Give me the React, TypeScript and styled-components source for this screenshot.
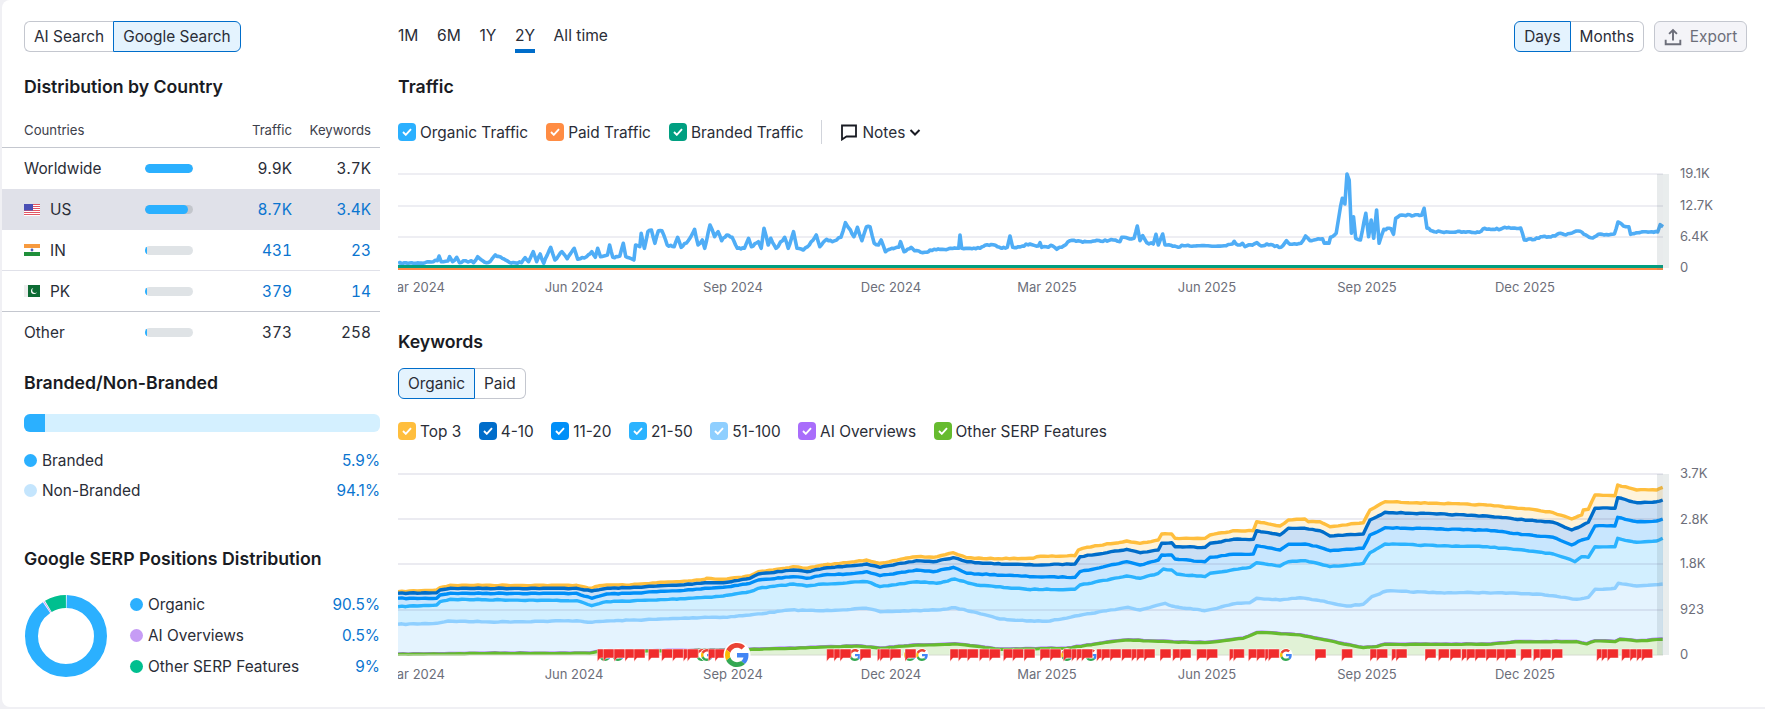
import React from "react";
import styled, { createGlobalStyle } from "styled-components";

type P = [number, number];

const seg = (bx: number, by: number, sx: number, sy: number, pts: number[][], min: number, max: number): P[] =>
  pts
    .map(([x, y]) => [bx + x / sx, by + y / sy] as P)
    .filter(([x]) => x >= min && x < max);

const d = (pts: P[]) => "M" + pts.map(([x, y]) => `${x.toFixed(1)} ${y.toFixed(1)}`).join("L");
const area = (pts: P[], base: number) =>
  `${d(pts)}L${pts[pts.length - 1][0]} ${base}L${pts[0][0]} ${base}Z`;

// Fine sampling with a small repeatable wobble, for the noisy look of daily data.
const densify = (pts: P[], step: number, amp: number): P[] => {
  const out: P[] = [];
  let seed = 7;
  const rnd = () => {
    seed = (seed * 16807) % 2147483647;
    return seed / 2147483647 - 0.5;
  };
  for (let i = 0; i < pts.length - 1; i++) {
    const [x0, y0] = pts[i];
    const [x1, y1] = pts[i + 1];
    const n = Math.max(1, Math.round((x1 - x0) / step));
    out.push(pts[i]);
    for (let k = 1; k < n; k++) {
      out.push([x0 + ((x1 - x0) * k) / n, y0 + ((y1 - y0) * k) / n + rnd() * amp]);
    }
  }
  out.push(pts[pts.length - 1]);
  return out;
};

const trafficLine: P[] = densify([
  ...seg(390, 0, 2.85, 3, [[23,790],[100,788],[135,782],[140,768],[146,785],[165,783],[170,770],[178,785],[190,772],[198,788],[215,782],[222,786],[232,782],[238,788],[250,770],[270,787],[285,785],[300,765],[320,775],[340,787],[375,788],[385,773],[395,785],[408,755],[418,785],[428,762],[438,790],[458,742],[470,780],[490,755],[505,776],[525,745],[535,778],[560,770],[575,755],[585,772],[592,745],[600,770],[620,765],[626,735],[635,772],[655,768],[665,730],[672,770],[695,780],[700,735],[712,740],[716,700],[725,745],[735,695],[745,690],[755,730],[765,692],[775,692],[790,735],[810,740],[820,712],[830,742],[850,722],[868,688],[878,735],[890,720],[897,745],[912,675],[925,710],[935,695],[945,722],[960,705],[975,712],[990,745],[1010,745],[1022,715],[1030,740],[1050,725],[1058,745],[1066,685],[1078,735],[1085,715],[1100,745],[1125,712],[1135,745],[1150,695],[1160,745],[1178,750],[1195,735],[1215,705],[1225,740],[1245,718],[1260,725],[1285,712],[1298,668],[1312,690],[1322,710],[1332,682],[1345,722],[1358,680],[1368,680],[1380,730],[1392,735],[1400,720],[1412,755],[1430,745],[1450,742],[1455,725],[1465,755],[1485,742],[1495,752],[1530,757],[1545,748],[1568,747]], 0, 930),
  ...seg(930, 170, 3, 3, [[0,240],[80,235],[86,235],[90,195],[95,235],[150,235],[165,226],[190,224],[215,235],[232,232],[240,198],[248,232],[265,230],[300,222],[325,228],[330,218],[335,232],[355,232],[362,226],[380,238],[395,232],[420,212],[470,215],[550,210],[570,215],[575,202],[600,207],[612,205],[622,168],[630,212],[638,197],[650,218],[670,222],[678,193],[685,225],[698,192],[705,225],[745,232],[755,226],[840,228]], 930, 1200),
  ...seg(1200, 0, 2.775, 3, [[0,737],[50,738],[90,732],[95,724],[105,735],[118,730],[125,740],[150,732],[158,728],[170,738],[185,732],[225,742],[240,722],[250,733],[280,730],[293,708],[305,722],[340,716],[345,730],[358,730],[362,712],[378,700],[390,620],[395,595],[402,612],[408,522],[414,540],[420,700],[426,650],[432,715],[445,720],[460,640],[468,710],[475,660],[482,715],[490,630],[497,730],[510,688],[530,686],[537,703],[543,655],[560,645],[615,646],[622,625],[630,685],[650,695],[775,697],[785,687],[835,687],[845,682],[890,684],[900,720],[940,715],[950,710],[985,708],[1000,700],[1015,705],[1050,693],[1075,708],[1090,714],[1105,703],[1150,702],[1160,666],[1175,678],[1190,680],[1195,703],[1215,698],[1270,696],[1277,674],[1285,680]], 1200, 1700),
], 2, 1.6);

const three = (a: number[][], b: number[][], c: number[][]): P[] =>
  densify([
    ...seg(390, 560, 3, 3, a, 0, 880),
    ...seg(880, 460, 3, 3, b, 880, 1320),
    ...seg(1320, 460, 3, 3, c, 1320, 1700),
  ], 4, 0.8);

const top3 = three(
  [[24,95],[140,90],[150,83],[180,76],[300,76],[460,76],[560,76],[605,85],[615,80],[650,75],[720,75],[800,68],[870,65],[945,58],[950,55],[1000,58],[1080,47],[1105,35],[1150,30],[1210,20],[1250,25],[1300,15],[1370,8],[1430,0],[1470,8]],
  [[0,310],[40,302],[110,290],[160,292],[220,278],[260,293],[320,296],[460,295],[470,290],[585,287],[595,270],[620,262],[740,243],[780,250],[835,240],[845,222],[875,222],[885,235],[975,235],[990,225],[1060,212],[1120,212],[1130,185],[1200,198],[1225,180],[1275,177],[1285,185],[1320,190]],
  [[0,185],[30,200],[130,188],[150,150],[195,125],[350,130],[500,135],[650,150],[700,158],[755,177],[785,165],[790,150],[805,148],[825,105],[885,107],[893,75],[950,90],[1010,90],[1028,82]]
);
const s410 = three(
  [[24,100],[140,98],[150,90],[180,85],[460,85],[560,85],[605,93],[650,85],[720,83],[800,78],[870,75],[945,68],[1000,68],[1080,55],[1105,42],[1210,30],[1250,35],[1300,25],[1370,18],[1430,12],[1470,20]],
  [[0,322],[40,315],[110,302],[160,305],[220,293],[260,305],[320,310],[460,315],[585,312],[600,290],[740,268],[780,278],[835,270],[845,250],[875,248],[885,260],[975,262],[990,250],[1060,238],[1120,238],[1130,212],[1200,225],[1225,205],[1275,205],[1320,215]],
  [[0,212],[30,228],[130,222],[150,180],[195,157],[350,162],[500,168],[650,183],[700,187],[755,210],[785,197],[805,187],[825,145],[885,145],[893,113],[950,128],[1010,125],[1028,120]]
);
const s1120 = three(
  [[24,115],[140,115],[150,105],[180,100],[460,100],[560,100],[605,115],[650,102],[720,100],[800,95],[870,92],[945,85],[1000,82],[1080,70],[1105,60],[1210,50],[1250,55],[1300,45],[1370,42],[1430,35],[1470,47]],
  [[0,347],[40,342],[110,330],[160,335],[220,322],[260,340],[460,350],[585,352],[600,335],[740,305],[780,315],[835,300],[845,285],[875,285],[885,297],[975,305],[990,292],[1060,283],[1120,282],[1130,257],[1200,270],[1225,253],[1275,252],[1320,265]],
  [[0,262],[30,272],[130,265],[150,225],[195,203],[350,207],[500,210],[650,228],[700,232],[755,255],[785,240],[805,235],[825,198],[885,198],[893,172],[950,185],[1010,183],[1028,177]]
);
const s2150 = three(
  [[24,140],[140,135],[150,125],[180,118],[560,122],[605,137],[650,125],[800,120],[945,112],[1000,108],[1080,95],[1105,85],[1210,72],[1250,78],[1300,72],[1430,65],[1470,75]],
  [[0,380],[110,365],[170,370],[225,357],[290,375],[440,388],[585,388],[600,375],[740,348],[780,355],[835,340],[850,327],[875,330],[890,342],[975,350],[990,340],[1110,322],[1130,308],[1200,318],[1225,305],[1275,302],[1320,317]],
  [[0,312],[30,320],[130,310],[150,278],[195,252],[350,257],[500,260],[650,275],[700,282],[765,305],[785,290],[805,292],[825,260],[885,260],[893,235],[950,247],[1010,243],[1028,235]]
);
const s51 = densify([
  ...seg(390, 560, 3, 3, [[24,193],[140,190],[175,183],[300,186],[460,184],[560,182],[605,187],[650,183],[800,178],[945,172],[1000,172],[1080,165],[1200,150],[1300,152],[1430,145],[1470,155]], 0, 880),
  ...seg(880, 560, 3, 3, [[0,155],[170,150],[225,143],[290,158],[360,177],[440,183],[510,183],[585,168],[680,152],[745,142],[780,150],[855,130],[885,140],[975,152],[1070,130],[1110,128],[1130,115],[1200,120],[1260,113],[1320,122]], 880, 1320),
  ...seg(1320, 460, 3, 3, [[0,422],[80,438],[130,433],[155,410],[200,393],[350,398],[500,398],[650,402],[770,418],[805,412],[825,388],[885,385],[895,370],[950,378],[1028,372]], 1320, 1700),
], 4, 0.8);
const green = densify([
  ...seg(390, 560, 3, 3, [[24,283],[300,280],[600,280],[620,275],[1000,270],[1200,265],[1400,258],[1470,262]], 0, 880),
  ...seg(880, 560, 3, 3, [[0,265],[100,256],[225,252],[360,268],[560,265],[680,247],[745,240],[880,246],[975,248],[1090,235],[1130,218],[1160,218],[1260,225],[1320,240]], 880, 1320),
  ...seg(1320, 460, 3, 3, [[0,537],[130,563],[170,560],[195,553],[500,553],[600,545],[770,545],[800,552],[825,543],[885,545],[900,538],[950,543],[1028,538]], 1320, 1700),
], 5, 0.5);

const layers: { pts: P[]; fill: string; stroke: string }[] = [
  { pts: top3, fill: "#fff3d9", stroke: "#ffbe3d" },
  { pts: s410, fill: "#cbdff4", stroke: "#006dca" },
  { pts: s1120, fill: "#c8e6fe", stroke: "#008ff8" },
  { pts: s2150, fill: "#d2efff", stroke: "#2bb3ff" },
  { pts: s51, fill: "#e4f3fe", stroke: "#8fcfff" },
];

const flagX = [
  ...[622, 640, 672, 705, 732, 775, 815, 848, 880, 892, 955, 975, 1310, 1332, 1350, 1410, 1462].map((x) => 390 + x / 3),
  ...[0, 30, 75, 210, 235, 262, 298, 328, 370, 398, 432, 480, 510, 550, 575, 590, 605, 650, 665, 690, 725, 755, 770, 792, 840, 878, 900, 950, 980, 1048, 1060, 1105, 1130, 1155, 1165, 1305].map((x) => 880 + x / 3),
  ...[65, 150, 170, 215, 228, 315, 355, 390, 425, 440, 465, 498, 530, 555, 602, 640, 660, 695, 830, 845, 862, 905, 930, 950, 965].map((x) => 1320 + x / 3),
].filter((x) => x < 1655);

const smallG = [605, 618, 702, 707, 855, 910, 922, 1067, 1091, 1286];

const GoogleG = ({ x, y, size }: { x: number; y: number; size: number }) => (
  <g transform={`translate(${x - size / 2} ${y - size / 2}) scale(${size / 48})`}>
    <circle cx="24" cy="24" r="27" fill="#fff" />
    <path fill="#EA4335" d="M24 9.5c3.54 0 6.71 1.22 9.21 3.6l6.85-6.85C35.9 2.38 30.47 0 24 0 14.62 0 6.51 5.38 2.56 13.22l7.98 6.19C12.43 13.72 17.74 9.5 24 9.5z" />
    <path fill="#4285F4" d="M46.98 24.55c0-1.57-.15-3.09-.38-4.55H24v9.02h12.94c-.58 2.96-2.26 5.48-4.78 7.18l7.73 6c4.51-4.18 7.09-10.36 7.09-17.65z" />
    <path fill="#FBBC05" d="M10.53 28.59c-.5-1.45-.78-2.99-.78-4.59s.27-3.14.78-4.59l-7.98-6.19C.92 16.46 0 20.12 0 24c0 3.88.92 7.54 2.56 10.78l7.97-6.19z" />
    <path fill="#34A853" d="M24 48c6.48 0 11.93-2.13 15.89-5.81l-7.73-6c-2.15 1.45-4.92 2.3-8.16 2.3-6.26 0-11.57-4.22-13.47-9.91l-7.98 6.19C6.51 42.62 14.62 48 24 48z" />
  </g>
);

const BODY = "15.4px";

const GlobalStyle = createGlobalStyle`
  html, body { margin: 0; padding: 0; background: #f0f0f4; }
  body { font-family: Inter, "Noto Sans", "Liberation Sans", sans-serif; color: #191b23; font-size: ${BODY}; }
  * { box-sizing: border-box; }
`;

const Card = styled.div`
  width: 1763px; height: 707px; margin-left: 2px;
  background: #fff; overflow: hidden;
  display: grid; grid-template-columns: 378px minmax(0, 1fr);
  border-radius: 8px 0 0 8px;
`;
const Left = styled.aside` padding-top: 21px; `;
const Right = styled.main` padding: 21px 18px 0 18px; `;
const Inset = styled.div` padding: 0 0 0 22px; `;
const SegGroup = styled.div<{ $mt?: number }>`
  display: inline-flex; height: 31px; vertical-align: top; margin-top: ${(p) => p.$mt ?? 0}px;
`;
const SegBtn = styled.div<{ $on?: boolean; $pos: "l" | "r" }>`
  display: flex; align-items: center; justify-content: center; padding: 0 9px;
  font-size: ${BODY}; color: #2a2d37;
  border: 1px solid ${(p) => (p.$on ? "#006dca" : "#c4c7cf")};
  background: ${(p) => (p.$on ? "#e4f3fe" : "#fff")};
  border-radius: ${(p) => (p.$pos === "l" ? "6px 0 0 6px" : "0 6px 6px 0")};
  ${(p) => (p.$pos === "r" && !p.$on ? "border-left: none;" : "")}
  ${(p) => (p.$pos === "l" && !p.$on ? "border-right: none;" : "")}
`;
const Title = styled.h3<{ $mt: number }>`
  margin: ${(p) => p.$mt}px 0 0; height: 24px; line-height: 24px;
  font-size: 17.7px; font-weight: 600; color: #191b23;
`;
const TableHead = styled.div`
  display: grid; grid-template-columns: 1fr 60px 79px; height: 49px;
  padding: 14px 9px 0 22px; align-items: center; font-size: 13.2px; color: #3d404b;
  border-bottom: 1px solid #c4c7cf; text-align: right;
`;
const HeadFirst = styled.span` text-align: left; `;
const Row = styled.div<{ $sel?: boolean; $line?: string }>`
  display: grid; grid-template-columns: 121px 1fr 60px 79px; height: 41px;
  padding: 0 9px 0 22px; align-items: center; font-size: ${BODY};
  background: ${(p) => (p.$sel ? "#e0e1e9" : "#fff")};
  border-bottom: ${(p) => (p.$line ? `1px solid ${p.$line}` : "none")};
`;
const Country = styled.div` display: flex; align-items: center; gap: 10px; color: #2a2d37; `;
const Bar = styled.div<{ $sel?: boolean }>`
  width: 48px; height: 9px; border-radius: 5px; overflow: hidden;
  background: ${(p) => (p.$sel ? "#c3c6cc" : "#dfe3e6")};
`;
const BarFill = styled.div` height: 100%; background: #2bb0ff; border-radius: 5px; `;
const Num = styled.span<{ $link?: boolean }>`
  text-align: right; font-variant-numeric: tabular-nums;
  color: ${(p) => (p.$link ? "#0a75d0" : "#2a2d37")};
`;
const Branded = styled.div`
  width: 356px; height: 18px; margin-top: 19px; background: #d4f0ff; border-radius: 6px; overflow: hidden;
`;
const BrandedFill = styled.div` height: 100%; background: #2bb0ff; `;
const LegendRows = styled.div<{ $mt?: number; $w: number; $h: number }>`
  width: ${(p) => p.$w}px; margin-top: ${(p) => p.$mt ?? 0}px;
  & > div { height: ${(p) => p.$h}px; }
`;
const LegendRow = styled.div`
  display: flex; align-items: center; font-size: ${BODY}; color: #2a2d37;
`;
const Dot = styled.span<{ $c: string }>`
  width: 13px; height: 13px; border-radius: 50%; background: ${(p) => p.$c}; margin-right: 5px; flex: none;
`;
const Pct = styled.span` margin-left: auto; color: #0a75d0; `;
const SerpRow = styled.div` display: flex; align-items: center; gap: 22px; margin-top: 18px; `;
const Donut = styled.svg` width: 84px; height: 84px; flex: none; `;
const Toolbar = styled.div` display: flex; align-items: flex-start; `;
const Range = styled.div` display: flex; gap: 18.6px; `;
const RangeTab = styled.div<{ $on?: boolean }>`
  height: 32px; line-height: 29px; font-size: 15.6px; color: #2a2d37;
  border-bottom: 4px solid ${(p) => (p.$on ? "#006dca" : "transparent")};
`;
const ToolRight = styled.div` margin-left: auto; display: flex; gap: 10px; `;
const ExportBtn = styled.div`
  width: 93px; height: 31px; display: flex; align-items: center; justify-content: center; gap: 8px;
  font-size: ${BODY}; color: #6c6e79; background: #f4f4f8; border: 1px solid #c4c7cf; border-radius: 6px;
`;
const Legend = styled.div<{ $mt: number; $gap: number }>`
  display: flex; align-items: center; gap: ${(p) => p.$gap}px; height: 24px; margin-top: ${(p) => p.$mt}px;
`;
const Item = styled.div` display: flex; align-items: center; gap: 4px; font-size: ${BODY}; color: #2a2d37; `;
const Check = styled.span<{ $c: string }>`
  width: 18px; height: 18px; border-radius: 4px; background: ${(p) => p.$c};
  display: flex; align-items: center; justify-content: center; flex: none;
`;
const Sep = styled.div` width: 1px; height: 24px; background: #d1d4db; `;
const Notes = styled.div` display: flex; align-items: center; gap: 4px; font-size: ${BODY}; color: #2a2d37; `;
const Chart = styled.svg<{ $h: number; $mt: number }>`
  display: block; width: 1367px; height: ${(p) => p.$h}px; margin-top: ${(p) => p.$mt}px;
  font-family: Inter, "Noto Sans", sans-serif; font-size: 13px;
`;
const Tick = styled.text` fill: #6c6e79; font-size: 13px; `;

const CheckBox = ({ c }: { c: string }) => (
  <Check $c={c}>
    <svg width="10" height="8" viewBox="0 0 10 8" fill="none">
      <path d="M1 4l2.8 2.8L9 1.2" stroke="#fff" strokeWidth="1.9" />
    </svg>
  </Check>
);

const Flag = ({ code }: { code: string }) => (
  <svg width="16" height="12" viewBox="0 0 16 12">
    {code === "US" && (
      <>
        <rect width="16" height="12" fill="#fff" />
        {[0, 2, 4, 6, 8, 10].map((y) => <rect key={y} y={y} width="16" height="1" fill="#e25563" />)}
        <rect width="9" height="6.5" fill="#4a4fb5" />
      </>
    )}
    {code === "IN" && (
      <>
        <rect width="16" height="4" fill="#f79a3e" />
        <rect y="4" width="16" height="4" fill="#fff" />
        <rect y="8" width="16" height="4" fill="#1f8f3a" />
        <circle cx="8" cy="6" r="1.4" fill="#5060b0" />
      </>
    )}
    {code === "PK" && (
      <>
        <rect width="16" height="12" fill="#eee" />
        <rect x="4" width="12" height="12" fill="#0d6b34" />
        <circle cx="10" cy="6" r="3" fill="#fff" />
        <circle cx="11" cy="5.3" r="2.7" fill="#0d6b34" />
      </>
    )}
  </svg>
);

const countries = [
  { code: "US", name: "US", w: 90, t: "8.7K", k: "3.4K", sel: true },
  { code: "IN", name: "IN", w: 5, t: "431", k: "23", line: "#e0e1e9" },
  { code: "PK", name: "PK", w: 5, t: "379", k: "14", line: "#c4c7cf" },
];

const xTicks: [string, number][] = [["Mar 2024", 415], ["Jun 2024", 574], ["Sep 2024", 733], ["Dec 2024", 891], ["Mar 2025", 1047], ["Jun 2025", 1207], ["Sep 2025", 1367], ["Dec 2025", 1525]];

const C = 2 * Math.PI * 34.5;
const arc = (from: number, to: number) => ({
  strokeDasharray: `${(C * (to - from)) / 100} ${C}`,
  strokeDashoffset: `${(-C * from) / 100}`,
});

export default function App() {
  return (
    <Card>
      <GlobalStyle />
      <Left>
        <Inset>
          <SegGroup>
            <SegBtn $pos="l">AI Search</SegBtn>
            <SegBtn $pos="r" $on>Google Search</SegBtn>
          </SegGroup>
          <Title $mt={23}>Distribution by Country</Title>
        </Inset>
        <TableHead>
          <HeadFirst>Countries</HeadFirst>
          <span>Traffic</span>
          <span>Keywords</span>
        </TableHead>
        <Row>
          <Country>Worldwide</Country>
          <Bar><BarFill style={{ width: "100%" }} /></Bar>
          <Num>9.9K</Num>
          <Num>3.7K</Num>
        </Row>
        {countries.map((c) => (
          <Row key={c.code} $sel={c.sel} $line={c.line}>
            <Country><Flag code={c.code} />{c.name}</Country>
            <Bar $sel={c.sel}><BarFill style={{ width: `${c.w}%` }} /></Bar>
            <Num $link>{c.t}</Num>
            <Num $link>{c.k}</Num>
          </Row>
        ))}
        <Row>
          <Country>Other</Country>
          <Bar><BarFill style={{ width: "5%" }} /></Bar>
          <Num>373</Num>
          <Num>258</Num>
        </Row>
        <Inset>
          <Title $mt={18}>Branded/Non-Branded</Title>
          <Branded><BrandedFill style={{ width: "5.9%" }} /></Branded>
          <LegendRows $mt={13} $w={356} $h={30}>
            <LegendRow><Dot $c="#2bb0ff" />Branded<Pct>5.9%</Pct></LegendRow>
            <LegendRow><Dot $c="#c4e5fd" />Non-Branded<Pct>94.1%</Pct></LegendRow>
          </LegendRows>
          <Title $mt={42}>Google SERP Positions Distribution</Title>
          <SerpRow>
            <Donut viewBox="0 0 84 84">
              <g transform="rotate(-90 42 42)" fill="none" strokeWidth="13">
                <circle cx="42" cy="42" r="34.5" stroke="#2bb0ff" style={arc(0.3, 90.3)} />
                <circle cx="42" cy="42" r="34.5" stroke="#c69cf5" style={arc(90.6, 91.0)} />
                <circle cx="42" cy="42" r="34.5" stroke="#00bf8f" style={arc(91.3, 99.8)} />
              </g>
            </Donut>
            <LegendRows $w={250} $h={31}>
              <LegendRow><Dot $c="#2bb0ff" />Organic<Pct>90.5%</Pct></LegendRow>
              <LegendRow><Dot $c="#c69cf5" />AI Overviews<Pct>0.5%</Pct></LegendRow>
              <LegendRow><Dot $c="#00bf8f" />Other SERP Features<Pct>9%</Pct></LegendRow>
            </LegendRows>
          </SerpRow>
        </Inset>
      </Left>
      <Right>
        <Toolbar>
          <Range>
            <RangeTab>1M</RangeTab>
            <RangeTab>6M</RangeTab>
            <RangeTab>1Y</RangeTab>
            <RangeTab $on>2Y</RangeTab>
            <RangeTab>All time</RangeTab>
          </Range>
          <ToolRight>
            <SegGroup>
              <SegBtn $pos="l" $on>Days</SegBtn>
              <SegBtn $pos="r">Months</SegBtn>
            </SegGroup>
            <ExportBtn>
              <svg width="18" height="18" viewBox="0 0 16 16" fill="none" stroke="#6c6e79" strokeWidth="1.7">
                <path d="M8 11V2M4.5 5.2L8 1.8l3.5 3.4M1.5 10.5v4h13v-4" />
              </svg>
              Export
            </ExportBtn>
          </ToolRight>
        </Toolbar>
        <Title $mt={22}>Traffic</Title>
        <Legend $mt={21} $gap={18}>
          <Item><CheckBox c="#2bb0ff" />Organic Traffic</Item>
          <Item><CheckBox c="#ff8c43" />Paid Traffic</Item>
          <Item><CheckBox c="#009f81" />Branded Traffic</Item>
          <Sep />
          <Notes>
            <svg width="18" height="18" viewBox="0 0 18 18" fill="none" stroke="#191b23" strokeWidth="1.8">
              <path d="M2 2.5h14v11H6.5L2 16.5z" />
            </svg>
            Notes
            <svg width="12" height="12" viewBox="0 0 12 12" fill="none" stroke="#191b23" strokeWidth="2">
              <path d="M1.5 4L6 8.5 10.5 4" />
            </svg>
          </Notes>
        </Legend>
        <Chart $h={130} $mt={21} viewBox="398 165 1367 130">
          {[174, 206, 237].map((y) => (
            <line key={y} x1="398" x2="1663" y1={y} y2={y} stroke="#e9e9ef" strokeWidth="1.5" />
          ))}
          <rect x="1663" y="174" width="6" height="94" fill="#e9eded" />
          <path d={d(trafficLine)} fill="none" stroke="#4fadf6" strokeWidth="3.6" strokeLinejoin="round" />
          <line x1="398" x2="1663" y1="269" y2="269" stroke="#ff8c43" strokeWidth="2" />
          <line x1="398" x2="1663" y1="266.5" y2="266.5" stroke="#009f81" strokeWidth="3" />
          <rect x="1657" y="174" width="6" height="96" fill="rgba(90,110,120,.14)" />
          {[["19.1K", 178], ["12.7K", 210], ["6.4K", 241], ["0", 272]].map(([t, y]) => (
            <Tick key={t} x="1680" y={y}>{t}</Tick>
          ))}
          {xTicks.map(([t, x]) => (
            <Tick key={t} x={x} y="292" textAnchor="middle">{t}</Tick>
          ))}
        </Chart>
        <Title $mt={35}>Keywords</Title>
        <SegGroup $mt={14}>
          <SegBtn $pos="l" $on>Organic</SegBtn>
          <SegBtn $pos="r">Paid</SegBtn>
        </SegGroup>
        <Legend $mt={20} $gap={17.5}>
          <Item><CheckBox c="#ffbe3d" />Top 3</Item>
          <Item><CheckBox c="#006dca" />4-10</Item>
          <Item><CheckBox c="#008ff8" />11-20</Item>
          <Item><CheckBox c="#2bb3ff" />21-50</Item>
          <Item><CheckBox c="#8fcfff" />51-100</Item>
          <Item><CheckBox c="#a96dfb" />AI Overviews</Item>
          <Item><CheckBox c="#66bb2f" />Other SERP Features</Item>
        </Legend>
        <Chart $h={220} $mt={22} viewBox="398 465 1367 220">
          {layers.map((l) => <path key={l.stroke} d={area(l.pts, 655)} fill={l.fill} />)}
          <path d={area(green, 655)} fill="#e1f2d6" />
          {[474, 519, 564, 610].map((y) => (
            <line key={y} x1="398" x2="1663" y1={y} y2={y} stroke="rgba(120,125,165,.2)" strokeWidth="1.5" />
          ))}
          <rect x="1663" y="474" width="6" height="181" fill="#e9eded" />
          {layers.map((l) => (
            <path key={l.stroke} d={d(l.pts)} fill="none" stroke={l.stroke} strokeWidth="3.4" strokeLinejoin="round" />
          ))}
          <path d={d(green)} fill="none" stroke="#a96dfb" strokeWidth="2" transform="translate(0 -1)" />
          <path d={d(green)} fill="none" stroke="#66bb2f" strokeWidth="3.2" strokeLinejoin="round" />
          <line x1="398" x2="1663" y1="655" y2="655" stroke="#d5dccf" strokeWidth="1" />
          <rect x="1657" y="474" width="6" height="181" fill="rgba(90,110,120,.14)" />
          {smallG.map((x) => <GoogleG key={x} x={x} y={655} size={12} />)}
          {flagX.map((x) => (
            <path key={x} d={`M${x} 649h11v9h-8l-3 3.5z`} fill="#f02c2c" stroke="#fff" strokeOpacity=".65" strokeWidth=".7" />
          ))}
          <GoogleG x={737} y={655} size={24} />
          {[["3.7K", 478], ["2.8K", 524], ["1.8K", 568], ["923", 614], ["0", 659]].map(([t, y]) => (
            <Tick key={t} x="1680" y={y}>{t}</Tick>
          ))}
          {xTicks.map(([t, x]) => (
            <Tick key={t} x={x} y="679" textAnchor="middle">{t}</Tick>
          ))}
        </Chart>
      </Right>
    </Card>
  );
}
